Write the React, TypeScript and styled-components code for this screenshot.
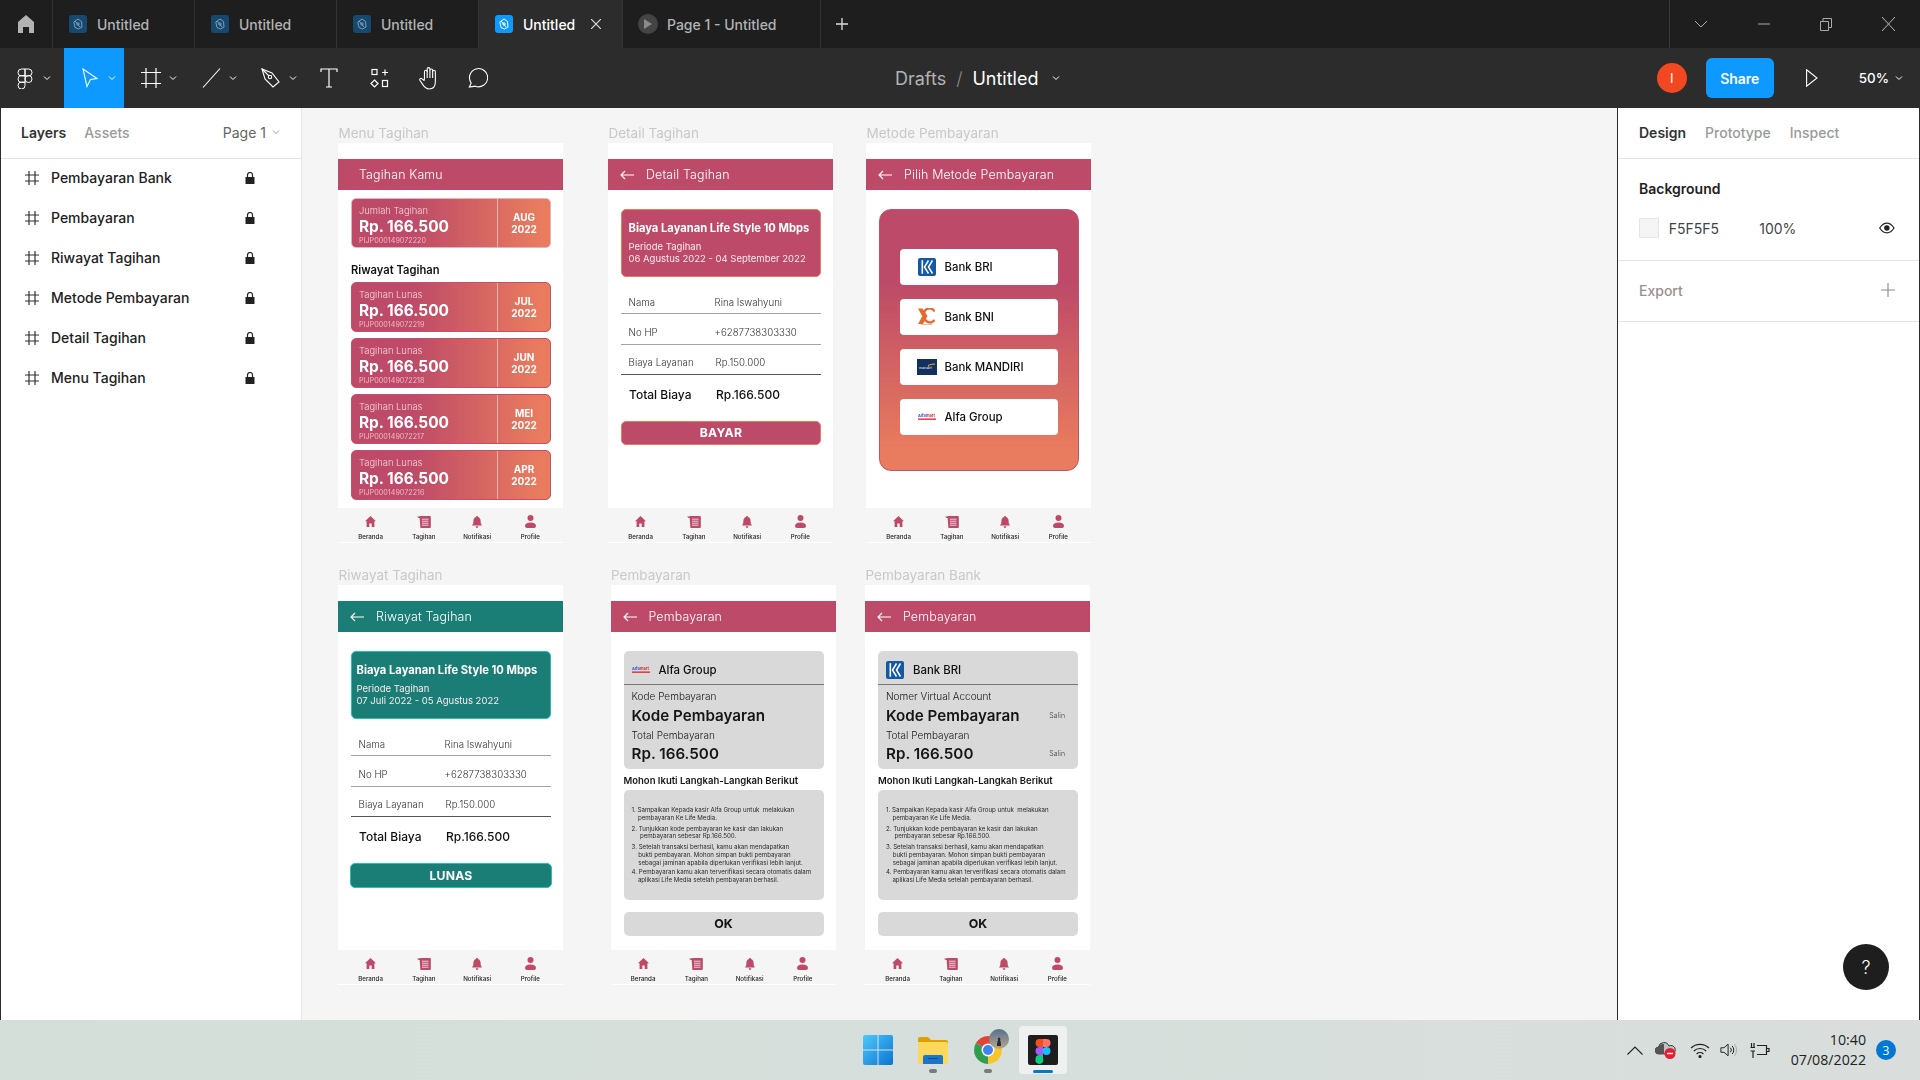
import React from "react";
import styled, { createGlobalStyle } from "styled-components";

const Global = createGlobalStyle`
  html, body { margin: 0; padding: 0; width: 1920px; height: 1080px; overflow: hidden; background: #f5f5f5; }
  body { font-family: Inter, "Liberation Sans", sans-serif; }
  * { box-sizing: border-box; }
`;

const rose = "#bd4a68";
const coral = "#e97c5e";
const teal = "#1b7e76";

const Page = styled.div`
  width: 1920px;
  height: 1080px;
  display: flex;
  flex-direction: column;
`;

/* ---------- tab bar ---------- */
const TabBar = styled.div`
  height: 48px;
  background: #1e1e1e;
  display: flex;
  color: #b3b3b3;
`;
const HomeTab = styled.div`
  width: 53px;
  display: flex;
  align-items: center;
  justify-content: center;
  border-right: 1px solid #333;
`;
const Tab = styled.div<{ $w: number; $active?: boolean }>`
  width: ${(p) => p.$w}px;
  display: flex;
  align-items: center;
  padding-left: 16px;
  gap: 10px;
  font-size: 14px;
  font-weight: 500;
  border-right: 1px solid #333;
  background: ${(p) => (p.$active ? "#2c2c2c" : "transparent")};
  color: ${(p) => (p.$active ? "#fff" : "#b3b3b3")};
`;
const PrototypeTab = styled(Tab)`
  padding-left: 15px;
  gap: 9px;
`;
const TabIcon = styled.div<{ $active?: boolean }>`
  width: 18px;
  height: 18px;
  border-radius: 3px;
  background: ${(p) => (p.$active ? "#0d99ff" : "#16496f")};
  color: ${(p) => (p.$active ? "#fff" : "#7f9db5")};
  display: flex;
  align-items: center;
  justify-content: center;
`;
const TabClose = styled.span`
  margin-left: 6px;
  display: flex;
`;
const PlayDot = styled.div`
  width: 20px;
  height: 20px;
  border-radius: 50%;
  background: #444;
  display: flex;
  align-items: center;
  justify-content: center;
`;
const PlusTab = styled.div`
  width: 42px;
  display: flex;
  align-items: center;
  justify-content: center;
`;
const WindowControls = styled.div`
  margin-left: auto;
  width: 251px;
  border-left: 1px solid #3a3a3a;
  display: grid;
  grid-template-columns: repeat(4, 62.5px);
`;
const WinButton = styled.div`
  display: flex;
  align-items: center;
  justify-content: center;
`;

/* ---------- toolbar ---------- */
const Toolbar = styled.div`
  height: 60px;
  background: #2c2c2c;
  display: flex;
  align-items: center;
  color: #fff;
`;
const Tool = styled.div<{ $w: number; $pad?: number; $active?: boolean }>`
  width: ${(p) => p.$w}px;
  height: 60px;
  padding-left: ${(p) => p.$pad ?? 17}px;
  display: flex;
  align-items: center;
  background: ${(p) => (p.$active ? "#0d99ff" : "transparent")};
`;
const ToolIcon = styled.div`
  width: 20px;
  display: flex;
  justify-content: center;
`;
const ToolChevron = styled.div`
  margin-left: 8px;
  display: flex;
`;
const Crumbs = styled.div`
  margin-left: 391px;
  display: flex;
  align-items: center;
  font-size: 18px;
`;
const CrumbMuted = styled.span`
  color: #b3b3b3;
`;
const CrumbSlash = styled.span`
  color: #8a8a8a;
  margin: 0 10px;
  font-weight: 300;
`;
const CrumbChevron = styled.span`
  margin-left: 14px;
  display: flex;
`;
const ToolbarRight = styled.div`
  margin-left: auto;
  display: flex;
  align-items: center;
  padding-right: 17px;
`;
const Avatar = styled.div`
  width: 30px;
  height: 30px;
  border-radius: 50%;
  background: #f24822;
  display: flex;
  align-items: center;
  justify-content: center;
  font-size: 13px;
`;
const ShareButton = styled.div`
  width: 68px;
  height: 40px;
  margin-left: 19px;
  border-radius: 6px;
  background: #0d99ff;
  display: flex;
  align-items: center;
  justify-content: center;
  font-size: 14px;
  font-weight: 600;
`;
const PlayButton = styled.div`
  margin-left: 32px;
  width: 12px;
  display: flex;
`;
const ZoomLabel = styled.div`
  margin-left: 41px;
  font-size: 13.4px;
  font-weight: 500;
  display: flex;
  align-items: center;
  gap: 6px;
`;

/* ---------- main ---------- */
const Main = styled.div`
  height: 912px;
  display: flex;
`;
const LeftPanel = styled.aside`
  width: 302px;
  background: #fff;
  border-left: 1px solid #2c2c2c;
  border-right: 1px solid #e5e5e5;
`;
const PanelTabs = styled.div`
  height: 51px;
  padding-bottom: 2px;
  border-bottom: 1px solid #e5e5e5;
  display: flex;
  align-items: center;
  font-size: 14px;
  font-weight: 500;
  color: #9a9a9a;
`;
const LeftTabs = styled(PanelTabs)`
  padding-left: 20px;
  padding-right: 21px;
  gap: 18px;
`;
const PanelTabActive = styled.span`
  color: #333;
  font-weight: 600;
`;
const PageSelect = styled.span`
  margin-left: auto;
  display: flex;
  align-items: center;
  gap: 6px;
  font-weight: 400;
  color: #666;
`;
const LayerList = styled.div`
  margin-top: -1.5px;
  display: flex;
  flex-direction: column;
`;
const LayerRow = styled.div`
  height: 40px;
  padding-left: 24px;
  display: flex;
  align-items: center;
  font-size: 14px;
  font-weight: 500;
  color: #222;
`;
const LayerName = styled.span`
  margin-left: 12px;
  width: 194px;
`;
const Canvas = styled.main`
  flex: 1;
  position: relative;
  background: #f5f5f5;
`;
const RightPanel = styled.aside`
  width: 303px;
  position: relative;
  background: #fff;
  border-left: 1.5px solid #2c2c2c;
  border-right: 1px solid #2c2c2c;
`;
const RightTabs = styled(PanelTabs)`
  padding-left: 21px;
  gap: 19px;
`;
const Section = styled.section<{ $h: number }>`
  height: ${(p) => p.$h}px;
  border-bottom: 1px solid #e5e5e5;
  padding: 0 24px 0 21px;
`;
const SectionTitle = styled.div`
  padding-top: 21px;
  font-size: 14px;
  font-weight: 600;
  color: #222;
`;
const BgRow = styled.div`
  margin-top: 21px;
  height: 20px;
  display: flex;
  align-items: center;
  font-size: 14px;
  color: #444;
`;
const Swatch = styled.div`
  width: 20px;
  height: 20px;
  background: #f5f5f5;
  border: 1px solid #e5e5e5;
`;
const HexValue = styled.span`
  margin-left: 10px;
  width: 92px;
`;
const Opacity = styled.span`
  width: 122px;
`;
const ExportRow = styled.div`
  height: 58px;
  display: flex;
  align-items: center;
  justify-content: space-between;
  font-size: 14px;
  font-weight: 500;
  color: #9a8f8f;
`;
const HelpButton = styled.div`
  position: absolute;
  right: 30px;
  bottom: 30px;
  width: 46px;
  height: 46px;
  border-radius: 50%;
  background: #1e1e1e;
  color: #fff;
  display: flex;
  align-items: center;
  justify-content: center;
  font-size: 18px;
  font-weight: 300;
`;

/* ---------- canvas frames ---------- */
const Node = styled.div<{ $x: number; $y: number }>`
  position: absolute;
  left: ${(p) => p.$x}px;
  top: ${(p) => p.$y}px;
  width: 225px;
  filter: blur(0.3px);
`;
const NodeLabel = styled.div`
  height: 21px;
  line-height: 23px;
  padding-left: 0.5px;
  font-size: 13.5px;
  color: #c8c8c8;
`;
const Board = styled.div`
  height: 365px;
  background: #fff;
  padding-top: 16px;
`;
const Header = styled.div<{ $color: string }>`
  height: 31px;
  background: ${(p) => p.$color};
  color: #fff;
  display: flex;
  align-items: center;
  padding-left: 12px;
  font-size: 12.4px;
  font-weight: 300;
  letter-spacing: 0.15px;
`;
const HeaderTitle = styled.span<{ $back?: boolean }>`
  margin-left: ${(p) => (p.$back ? 12 : 9)}px;
`;
const Content = styled.div`
  padding: 0 12px 0 13px;
`;
const BillStack = styled.div`
  display: flex;
  flex-direction: column;
  gap: 6px;
`;
const FirstBill = styled.div`
  padding-top: 8px;
`;
const BillCard = styled.div<{ $first?: boolean }>`
  height: 50px;
  border-radius: 5px;
  border: 1px solid ${(p) => (p.$first ? "#e6b2c0" : "#c4506f")};
  background: linear-gradient(90deg, ${rose} 30%, ${coral} 95%);
  display: flex;
  color: #fff;
`;
const BillMain = styled.div`
  flex: 1;
  padding: 6px 0 0 7px;
`;
const BillLabel = styled.div`
  margin-bottom: 2px;
  font-size: 9.4px;
  font-weight: 300;
  line-height: 11px;
  color: #f6d5dc;
`;
const BillAmount = styled.div`
  font-size: 15.4px;
  line-height: 18px;
  font-weight: 700;
`;
const BillId = styled.div`
  font-size: 7.2px;
  line-height: 10px;
  color: #efb9c6;
`;
const BillMonth = styled.div`
  width: 53px;
  border-left: 1px solid rgba(255, 255, 255, 0.45);
  display: flex;
  flex-direction: column;
  align-items: center;
  justify-content: center;
  font-size: 10px;
  line-height: 12px;
  font-weight: 700;
`;
const HistoryTitle = styled.div`
  margin: 15px 0 5px;
  font-size: 11.2px;
  line-height: 14px;
  font-weight: 600;
  color: #111;
`;
const SummaryCard = styled.div<{ $bg: string; $edge: string; $tight?: boolean }>`
  margin-top: 18.7px;
  height: 68.6px;
  border: 1px solid ${(p) => p.$edge};
  border-radius: 5px;
  background: ${(p) => p.$bg};
  color: #fff;
  padding: 11px 0 0 ${(p) => (p.$tight ? 4.5 : 6.5)}px;
`;
const SummaryTitle = styled.div`
  font-size: 11.2px;
  line-height: 15px;
  font-weight: 700;
`;
const SummaryText = styled.div`
  font-size: 9.5px;
  line-height: 11.3px;
  font-weight: 400;
  color: #fbeaee;
`;
const SummaryGap = styled.div`
  height: 5.6px;
`;
const InfoRows = styled.div`
  margin-top: 6.7px;
`;
const InfoRow = styled.div<{ $strong?: boolean }>`
  height: 30.3px;
  padding: 7px 0 0 7.6px;
  display: flex;
  align-items: center;
  font-size: 9.7px;
  font-weight: 300;
  color: #333;
  border-bottom: ${(p) => (p.$strong ? "1px solid #555" : "1.5px solid #a3a3a3")};
`;
const InfoKey = styled.span<{ $w: number }>`
  width: ${(p) => p.$w}px;
`;
const TotalRow = styled.div`
  height: 40px;
  padding-left: 8px;
  display: flex;
  align-items: center;
  font-size: 12px;
  font-weight: 500;
  color: #111;
`;
const ActionButton = styled.div<{ $bg: string; $edge: string; $tall?: boolean }>`
  margin: 6px ${(p) => (p.$tall ? "-1px" : "0")} 0;
  height: ${(p) => (p.$tall ? 25.5 : 23.7)}px;
  border: 1px solid ${(p) => p.$edge};
  border-radius: 5px;
  background: ${(p) => p.$bg};
  color: #fff;
  display: flex;
  align-items: center;
  justify-content: center;
  font-size: 12.2px;
  font-weight: 700;
  letter-spacing: 0.2px;
`;
const MethodPanel = styled.div`
  margin: 18.7px 0 0 -0.5px;
  height: 262px;
  border: 1px solid #c4506f;
  border-radius: 12px;
  background: linear-gradient(180deg, ${rose} 28%, ${coral} 93%);
  padding: 39px 20px 0;
  display: flex;
  flex-direction: column;
  gap: 13.7px;
`;
const MethodButton = styled.div`
  height: 36.3px;
  border-radius: 4px;
  background: #fff;
  display: flex;
  align-items: center;
  font-size: 11.4px;
  font-weight: 500;
  color: #111;
`;
const MethodLogo = styled.div`
  width: 45px;
  display: flex;
  justify-content: center;
  padding-left: 9px;
`;
const PayPanel = styled.div`
  margin-top: 19px;
  height: 118.3px;
  border-radius: 5px;
  background: #d9d9d9;
`;
const PayHead = styled.div`
  height: 34px;
  padding: 4px 0 0 8px;
  border-bottom: 1px solid #777;
  display: flex;
  align-items: center;
  font-size: 11.4px;
  font-weight: 500;
  color: #111;
`;
const PayLogo = styled.div`
  width: 18px;
  display: flex;
  justify-content: center;
  margin-right: 9px;
`;
const PayLine = styled.div<{ $h: number; $big?: boolean }>`
  height: ${(p) => p.$h}px;
  padding: 0 13px 0 8px;
  display: flex;
  align-items: center;
  justify-content: space-between;
  font-size: ${(p) => (p.$big ? 15.2 : 10)}px;
  font-weight: ${(p) => (p.$big ? 600 : 300)};
  color: #151515;
`;
const Copy = styled.span`
  font-size: 7px;
  font-weight: 300;
  color: #444;
`;
const StepsTitle = styled.div`
  margin: 6px 0 3px;
  height: 12px;
  line-height: 12px;
  font-size: 9.5px;
  font-weight: 600;
  color: #151515;
`;
const StepsPanel = styled.div`
  height: 109.7px;
  border-radius: 5px;
  background: #d9d9d9;
  padding: 16px 0 0 8px;
`;
const StepLine = styled.div<{ $indent?: number; $gap?: number }>`
  margin-top: ${(p) => p.$gap ?? 0}px;
  padding-left: ${(p) => p.$indent ?? 0}px;
  height: 7.67px;
  line-height: 7.67px;
  font-size: 6.15px;
  white-space: pre;
  color: #2a2a2a;
`;
const OkButton = styled.div`
  margin-top: 12px;
  height: 24px;
  border-radius: 5px;
  background: #d9d9d9;
  display: flex;
  align-items: center;
  justify-content: center;
  font-size: 12.4px;
  font-weight: 700;
  color: #111;
`;
const BottomNav = styled.div`
  height: 35px;
  padding: 0 6px;
  display: grid;
  grid-template-columns: repeat(4, 1fr);
  border-bottom: 1px solid #fff;
`;
const NavItem = styled.div`
  display: flex;
  flex-direction: column;
  align-items: center;
  padding-top: 7px;
  font-size: 6.2px;
  font-weight: 500;
  color: #222;
`;
const NavGlyph = styled.div`
  height: 13px;
  display: flex;
  align-items: center;
  margin-bottom: 5px;
`;

/* ---------- taskbar ---------- */
const Taskbar = styled.footer`
  height: 60px;
  background: linear-gradient(90deg, #d5dfd9, #d6dfdb 50%, #d9dedc);
  display: flex;
  align-items: center;
  position: relative;
`;
const TaskApps = styled.div`
  margin-left: 853.5px;
  display: flex;
  gap: 7px;
`;
const TaskSlot = styled.div<{ $active?: boolean }>`
  width: 48px;
  height: 48px;
  border-radius: 4px;
  position: relative;
  display: flex;
  align-items: center;
  justify-content: center;
  background: ${(p) => (p.$active ? "#eef1f0" : "transparent")};
`;
const TaskMark = styled.div<{ $active?: boolean }>`
  position: absolute;
  left: 50%;
  bottom: 1px;
  transform: translateX(-50%);
  width: ${(p) => (p.$active ? 20 : 8)}px;
  height: ${(p) => (p.$active ? 3 : 4)}px;
  border-radius: 2px;
  background: ${(p) => (p.$active ? "#0078d4" : "#787c7a")};
`;
const ChromeBadge = styled.div`
  position: absolute;
  left: 25px;
  top: 3px;
  display: flex;
`;
const Tray = styled.div`
  margin-left: auto;
  padding-right: 24px;
  display: flex;
  align-items: center;
`;
const TraySlot = styled.div<{ $w: number }>`
  width: ${(p) => p.$w}px;
  display: flex;
  justify-content: center;
`;
const Clock = styled.div`
  width: 84px;
  text-align: right;
  font-family: "Open Sans", "Noto Sans", sans-serif;
  font-size: 14.2px;
  line-height: 20px;
  color: #222;
`;
const Badge = styled.div`
  width: 20px;
  height: 20px;
  margin-left: 10px;
  border-radius: 50%;
  background: #0078d4;
  color: #fff;
  display: flex;
  align-items: center;
  justify-content: center;
  font-family: "Open Sans", sans-serif;
  font-size: 12px;
`;

/* ---------- drawings ---------- */
const Chevron = ({ c = "#fff", s = 8 }: { c?: string; s?: number }) => (
  <svg width={s} height={s} viewBox="0 0 8 8" fill="none" stroke={c} strokeWidth="1">
    <path d="M1 2.5 4 5.5 7 2.5" />
  </svg>
);
const FileGlyph = () => (
  <svg width="12" height="12" viewBox="0 0 12 12" fill="none" stroke="currentColor" strokeWidth="1">
    <path d="M6 1 9.5 3.5 10 9 6.5 11 3 9.5 1.8 4Z" />
    <path d="M3 3 8 9" />
    <circle cx="6" cy="6" r="1.2" />
  </svg>
);
const ArrowBack = () => (
  <svg width="14" height="10" viewBox="0 0 14 10" fill="none" stroke="#fff" strokeWidth="1.1">
    <path d="M14 5H1M5 1 1 5l4 4" />
  </svg>
);
const Hash = () => (
  <svg width="14" height="14" viewBox="0 0 14 14" fill="none" stroke="#333" strokeWidth="1.2">
    <path d="M4 0v14M10 0v14M0 4h14M0 10h14" />
  </svg>
);
const Lock = () => (
  <svg width="10" height="12" viewBox="0 0 10 12" fill="#222">
    <path d="M0.5 5h9v7h-9z" />
    <path d="M2.5 5V3a2.5 2.5 0 0 1 5 0v2" fill="none" stroke="#222" strokeWidth="1.2" />
  </svg>
);
const HomeIcon = () => (
  <svg width="11" height="11" viewBox="0 0 11 11" fill={rose}>
    <path d="M5.5 0 11 5.2H9.4V11H6.7V7.4H4.3V11H1.6V5.2H0Z" />
  </svg>
);
const BillIcon = () => (
  <svg width="14" height="12" viewBox="0 0 14 12">
    <path d="M0 .6h3.5V2H1.5z" fill={rose} />
    <path d="M2.6 0H13a.8.8 0 0 1 .8.8V11a1 1 0 0 1-1 1H3.4L2.6 1z" fill={rose} />
    <path d="M5 3.2h6.5M5 5.2h6.5M5 7.2h6.5M5 9.2h6.5" stroke="#f5f5f5" strokeWidth=".8" />
  </svg>
);
const BellIcon = () => (
  <svg width="10" height="12" viewBox="0 0 10 12" fill={rose}>
    <path d="M5 0c.6 0 1 .4 1 1 1.7.5 2.6 2 2.6 3.8 0 2.2.4 3.4 1.4 4.7H0C1 8.2 1.400 7 1.400 4.800 1.400 3 2.300 1.500 4 1c0-.6.400-1 1-1Z" />
    <path d="M3.700 10.300h2.600C6.300 11.200 5.700 12 5 12s-1.300-.8-1.300-1.700Z" />
  </svg>
);
const PersonIcon = () => (
  <svg width="11" height="13" viewBox="0 0 11 13" fill={rose}>
    <circle cx="5.500" cy="3" r="3" />
    <path d="M0 11c0-2.200 2-3.500 5.500-3.500S11 8.800 11 11c0 1.200-1 2-2 2H2c-1 0-2-.8-2-2Z" />
  </svg>
);
const BriLogo = () => (
  <svg width="18" height="18" viewBox="0 0 18 18">
    <rect width="18" height="18" rx="2" fill="#1259a7" />
    <path d="M3.500 2.200h1.600v13.600H3.500z" fill="#fff" />
    <path d="M10.500 2.500 6.500 9l4 6.500M14.500 2.500 10.500 9l4 6.500" fill="none" stroke="#fff" strokeWidth="1.500" />
  </svg>
);
const BniLogo = () => (
  <svg width="17" height="17" viewBox="0 0 17 17">
    <path d="M0 .5h4.500L9.500 8 5 16H0l4.300-7.800Z" fill="#e8692c" />
    <path d="M16.500 3.500A5.500 5.500 0 0 0 6.500 8.500a5.500 5.500 0 0 0 10 3.500" fill="none" stroke="#e8692c" strokeWidth="2.400" />
    <path d="M3 16.500h11" stroke="#f3b9a0" strokeWidth="1" />
  </svg>
);
const MandiriLogo = () => (
  <svg width="20" height="16" viewBox="0 0 20 16">
    <rect width="20" height="16" fill="#13305f" />
    <text x="2" y="9.500" fontSize="3.600" fill="#dfe6f2" fontFamily="Inter">mandiri</text>
    <path d="M11 6.500c2-1 4.500-1.400 7-1.400" stroke="#f4b731" strokeWidth="1" fill="none" />
  </svg>
);
const AlfaLogo = () => (
  <svg width="18" height="8" viewBox="0 0 18 8">
    <text x="0" y="4.400" fontSize="3.900" fontWeight="700" fill="#2a52e0" fontFamily="Inter">Alfa</text>
    <text x="8" y="4.400" fontSize="3.900" fontWeight="700" fill="#d42a2a" fontFamily="Inter">mart</text>
    <rect y="5.500" width="18" height="1.300" fill="#e01f26" />
  </svg>
);
const WindowsLogo = () => (
  <svg width="30" height="30" viewBox="0 0 30 30">
    <defs>
      <linearGradient id="winA" x1="0" y1="0" x2="1" y2="1">
        <stop offset="0" stopColor="#4fc8fa" />
        <stop offset="1" stopColor="#0a74d2" />
      </linearGradient>
    </defs>
    <rect width="30" height="30" rx="2" fill="url(#winA)" />
    <path d="M15 0v30M0 15h30" stroke="#d6e2e2" strokeWidth="1" />
  </svg>
);
const FolderLogo = () => (
  <svg width="30" height="27" viewBox="0 0 30 27">
    <path d="M0 2a2 2 0 0 1 2-2h8l3 3h15a2 2 0 0 1 2 2v2H0Z" fill="#e0a100" />
    <path d="M0 5h28a2 2 0 0 1 2 2v18a2 2 0 0 1-2 2H2a2 2 0 0 1-2-2Z" fill="#fbd75c" />
    <path d="M5 27v-7a2 2 0 0 1 2-2h16a2 2 0 0 1 2 2v7Z" fill="#1a76c8" />
    <path d="M10 21.500h10" stroke="#0c4f90" strokeWidth="1" />
  </svg>
);
const ChromeLogo = () => (
  <svg width="28" height="28" viewBox="0 0 28 28">
    <path d="M14 14 26.100 7A14 14 0 0 0 1.900 7Z" fill="#df4436" />
    <path d="M14 14 14 28A14 14 0 0 0 26.100 7Z" fill="#f8c62b" />
    <path d="M14 14 1.900 7A14 14 0 0 0 14 28Z" fill="#2f9e50" />
    <circle cx="14" cy="14" r="6.500" fill="#fff" />
    <circle cx="14" cy="14" r="5" fill="#3f82ee" />
  </svg>
);
const ProfileBadge = () => (
  <svg width="20" height="20" viewBox="0 0 20 20">
    <defs>
      <linearGradient id="sky" x1="0" y1="0" x2="0" y2="1">
        <stop offset="0" stopColor="#55718c" />
        <stop offset="1" stopColor="#b9a78e" />
      </linearGradient>
    </defs>
    <circle cx="10" cy="10" r="10" fill="url(#sky)" />
    <path d="M8 17c0-3 .5-5 1.300-6a1.300 1.300 0 1 1 1.600 0c.8 1 1.100 3 1.100 6Z" fill="#2a2a2a" />
  </svg>
);
const FigmaLogo = () => (
  <svg width="30" height="30" viewBox="0 0 30 30">
    <rect width="30" height="30" rx="2" fill="#1e1e1e" />
    <path d="M7.500 8a4 4 0 0 1 4-4H15v8h-3.500a4 4 0 0 1-4-4Z" fill="#f24e1e" />
    <path d="M15 4h3.500a4 4 0 0 1 0 8H15Z" fill="#ff7262" />
    <path d="M7.500 16a4 4 0 0 1 4-4H15v8h-3.500a4 4 0 0 1-4-4Z" fill="#a259ff" />
    <circle cx="18.500" cy="16" r="4" fill="#1abcfe" />
    <path d="M7.500 24a4 4 0 0 1 4-4H15v3.500a4 4 0 1 1-7.500.5Z" fill="#0acf83" />
  </svg>
);

const navItems = [
  { label: "Beranda", Icon: HomeIcon },
  { label: "Tagihan", Icon: BillIcon },
  { label: "Notifikasi", Icon: BellIcon },
  { label: "Profile", Icon: PersonIcon },
];
const Nav = () => (
  <BottomNav>
    {navItems.map(({ label, Icon }) => (
      <NavItem key={label}>
        <NavGlyph>
          <Icon />
        </NavGlyph>
        {label}
      </NavItem>
    ))}
  </BottomNav>
);

const Bill = ({ label, id, month, first }: { label: string; id: string; month: string; first?: boolean }) => (
  <BillCard $first={first}>
    <BillMain>
      <BillLabel>{label}</BillLabel>
      <BillAmount>Rp. 166.500</BillAmount>
      <BillId>{id}</BillId>
    </BillMain>
    <BillMonth>
      <span>{month}</span>
      <span>2022</span>
    </BillMonth>
  </BillCard>
);

const Detail = ({
  bg, edge, period, action, tall,
}: { bg: string; edge: string; period: string; action: string; tall?: boolean }) => (
  <Content>
    <SummaryCard $bg={bg} $edge={edge} $tight={tall}>
      <SummaryTitle>Biaya Layanan Life Style 10 Mbps</SummaryTitle>
      <SummaryGap />
      <SummaryText>Periode Tagihan</SummaryText>
      <SummaryText>{period}</SummaryText>
    </SummaryCard>
    <InfoRows>
      <InfoRow>
        <InfoKey $w={86}>Nama</InfoKey>
        <span>Rina Iswahyuni</span>
      </InfoRow>
      <InfoRow>
        <InfoKey $w={86}>No HP</InfoKey>
        <span>+6287738303330</span>
      </InfoRow>
      <InfoRow $strong>
        <InfoKey $w={87}>Biaya Layanan</InfoKey>
        <span>Rp.150.000</span>
      </InfoRow>
    </InfoRows>
    <TotalRow>
      <InfoKey $w={87}>Total Biaya</InfoKey>
      <span>Rp.166.500</span>
    </TotalRow>
    <ActionButton $bg={bg} $edge={edge} $tall={tall}>
      {action}
    </ActionButton>
  </Content>
);

const steps: { text: string; indent?: number; gap?: number }[] = [
  { text: "1. Sampaikan Kepada kasir Alfa Group untuk  melakukan" },
  { text: "pembayaran Ke Life Media.", indent: 6.400 },
  { text: "2. Tunjukkan kode pembayaran ke kasir dan lakukan", gap: 3 },
  { text: "pembayaran sebesar Rp.166.500.", indent: 8.400 },
  { text: "3. Setelah transaksi berhasil, kamu akan mendapatkan", gap: 3.300 },
  { text: "bukti pembayaran. Mohon simpan bukti pembayaran", indent: 6.700 },
  { text: "sebagai jaminan apabila diperlukan verifikasi lebih lanjut.", indent: 6.700 },
  { text: "4. Pembayaran kamu akan terverifikasi secara otomatis dalam", gap: 2 },
  { text: "aplikasi Life Media setelah pembayaran berhasil.", indent: 6.400 },
];

const Payment = ({
  logo, name, label, copy,
}: { logo: React.ReactNode; name: string; label: string; copy?: boolean }) => (
  <Content>
    <PayPanel>
      <PayHead>
        <PayLogo>{logo}</PayLogo>
        {name}
      </PayHead>
      <PayLine $h={22.300}>{label}</PayLine>
      <PayLine $h={17} $big>
        Kode Pembayaran
        {copy && <Copy>Salin</Copy>}
      </PayLine>
      <PayLine $h={22}>Total Pembayaran</PayLine>
      <PayLine $h={14} $big>
        Rp. 166.500
        {copy && <Copy>Salin</Copy>}
      </PayLine>
    </PayPanel>
    <StepsTitle>Mohon Ikuti Langkah-Langkah Berikut</StepsTitle>
    <StepsPanel>
      {steps.map((s) => (
        <StepLine key={s.text} $indent={s.indent} $gap={s.gap}>
          {s.text}
        </StepLine>
      ))}
    </StepsPanel>
    <OkButton>OK</OkButton>
  </Content>
);

const Frame = ({
  x, y, label, title, color = rose, back = true, children,
}: {
  x: number; y: number; label: string; title: string; color?: string; back?: boolean; children: React.ReactNode;
}) => (
  <Node $x={x} $y={y}>
    <NodeLabel>{label}</NodeLabel>
    <Board>
      <Header $color={color}>
        {back && <ArrowBack />}
        <HeaderTitle $back={back}>{title}</HeaderTitle>
      </Header>
      {children}
    </Board>
    <Nav />
  </Node>
);

const layers = ["Pembayaran Bank", "Pembayaran", "Riwayat Tagihan", "Metode Pembayaran", "Detail Tagihan", "Menu Tagihan"];
const methods = [
  { name: "Bank BRI", logo: <BriLogo /> },
  { name: "Bank BNI", logo: <BniLogo /> },
  { name: "Bank MANDIRI", logo: <MandiriLogo /> },
  { name: "Alfa Group", logo: <AlfaLogo /> },
];

export default function App() {
  return (
    <Page>
      <Global />
      <TabBar>
        <HomeTab>
          <svg width="16" height="18" viewBox="0 0 16 18" fill="#b3b3b3">
            <path d="M8 0 16 7v11h-5v-6H5v6H0V7Z" />
          </svg>
        </HomeTab>
        {[0, 1, 2].map((i) => (
          <Tab key={i} $w={142}>
            <TabIcon>
              <FileGlyph />
            </TabIcon>
            Untitled
          </Tab>
        ))}
        <Tab $w={144} $active>
          <TabIcon $active>
            <FileGlyph />
          </TabIcon>
          Untitled
          <TabClose>
            <svg width="10" height="10" viewBox="0 0 10 10" stroke="#ddd" strokeWidth="1.200">
              <path d="M0 0 10 10M10 0 0 10" />
            </svg>
          </TabClose>
        </Tab>
        <PrototypeTab $w={198}>
          <PlayDot>
            <svg width="8" height="10" viewBox="0 0 8 10" fill="#8a8a8a">
              <path d="M0 0 8 5 0 10Z" />
            </svg>
          </PlayDot>
          Page 1 - Untitled
        </PrototypeTab>
        <PlusTab>
          <svg width="12" height="12" viewBox="0 0 12 12" stroke="#ddd" strokeWidth="1.300">
            <path d="M6 0v12M0 6h12" />
          </svg>
        </PlusTab>
        <WindowControls>
          <WinButton>
            <svg width="14" height="8" viewBox="0 0 14 8" fill="none" stroke="#aaa">
              <path d="M1 1 7 7 13 1" />
            </svg>
          </WinButton>
          <WinButton>
            <svg width="12" height="2" viewBox="0 0 12 2" stroke="#aaa">
              <path d="M0 1h12" />
            </svg>
          </WinButton>
          <WinButton>
            <svg width="12" height="13" viewBox="0 0 12 13" fill="none" stroke="#aaa">
              <path d="M.5 3.500h8v9h-8zM3 3.500V.5h8.500v9H8.500" />
            </svg>
          </WinButton>
          <WinButton>
            <svg width="13" height="14" viewBox="0 0 13 14" stroke="#bbb">
              <path d="M0 0 13 14M13 0 0 14" />
            </svg>
          </WinButton>
        </WindowControls>
      </TabBar>

      <Toolbar>
        <Tool $w={64} $pad={14.500}>
          <ToolIcon>
            <svg width="16" height="21" viewBox="0 0 16 21" fill="none" stroke="#fff">
              <path d="M8 1H4.500a3.500 3.500 0 0 0 0 7H8ZM8 1h3.500a3.500 3.500 0 0 1 0 7H8ZM8 7.500H4.500a3.500 3.500 0 0 0 0 7H8Z" />
              <circle cx="11.500" cy="11" r="3.500" />
              <path d="M8 14H4.500A3.500 3.500 0 1 0 8 17.500Z" />
            </svg>
          </ToolIcon>
          <ToolChevron>
            <Chevron />
          </ToolChevron>
        </Tool>
        <Tool $w={60} $pad={16} $active>
          <ToolIcon>
            <svg width="16" height="20" viewBox="0 0 16 20" fill="none" stroke="#fff" strokeWidth="1.100">
              <path d="M1 1 15 10.500 8.500 11.500 5 18.500Z" />
            </svg>
          </ToolIcon>
          <ToolChevron>
            <Chevron />
          </ToolChevron>
        </Tool>
        <Tool $w={60}>
          <ToolIcon>
            <svg width="20" height="20" viewBox="0 0 20 20" stroke="#fff" strokeWidth="1.200">
              <path d="M5 0v20M15 0v20M0 4.500h20M0 15.500h20" />
            </svg>
          </ToolIcon>
          <ToolChevron>
            <Chevron />
          </ToolChevron>
        </Tool>
        <Tool $w={60}>
          <ToolIcon>
            <svg width="19" height="20" viewBox="0 0 19 20" stroke="#fff" strokeWidth="1.100">
              <path d="M1 19.500 18 .5" />
            </svg>
          </ToolIcon>
          <ToolChevron>
            <Chevron />
          </ToolChevron>
        </Tool>
        <Tool $w={60}>
          <ToolIcon>
            <svg width="20" height="20" viewBox="0 0 20 20" fill="none" stroke="#fff" strokeWidth="1.100">
              <path d="M1 1 4 11 12 19 18 14 11 5Z" />
              <path d="M1 1 8 8" />
              <circle cx="9" cy="9" r="1.700" />
            </svg>
          </ToolIcon>
          <ToolChevron>
            <Chevron />
          </ToolChevron>
        </Tool>
        <Tool $w={50} $pad={15}>
          <ToolIcon>
            <svg width="18" height="20" viewBox="0 0 18 20" fill="none" stroke="#fff" strokeWidth="1.200">
              <path d="M1 4V1h16v3M9 1v18M6 19h6" />
            </svg>
          </ToolIcon>
        </Tool>
        <Tool $w={50} $pad={16}>
          <ToolIcon>
            <svg width="20" height="20" viewBox="0 0 20 20" fill="none" stroke="#fff" strokeWidth="1.200">
              <rect x="2" y="1.500" width="5" height="5" />
              <path d="M15 1.500v6M12 4.500h6" />
              <path d="M4.500 12 8 15.500 4.500 19 1 15.500Z" />
              <rect x="12.500" y="12.500" width="5" height="6" />
            </svg>
          </ToolIcon>
        </Tool>
        <Tool $w={50} $pad={15}>
          <ToolIcon>
            <svg width="22" height="25" viewBox="0 0 22 25" fill="none" stroke="#fff" strokeWidth="1.200">
              <path d="M6 14V5a1.500 1.500 0 0 1 3 0V2a1.500 1.500 0 0 1 3 0v1.500a1.500 1.500 0 0 1 3 0V5a1.500 1.500 0 0 1 3 0v11c0 5-2.500 8-7 8-3.500 0-5-2-7-5l-3-4.500c-.8-1.500 1-3 2.500-1.500L6 15" />
              <path d="M9 4v8M12 3v9M15 4v8" />
            </svg>
          </ToolIcon>
        </Tool>
        <Tool $w={50} $pad={14}>
          <ToolIcon>
            <svg width="22" height="22" viewBox="0 0 22 22" fill="none" stroke="#fff" strokeWidth="1.200">
              <path d="M1.500 21 3.500 16.500A10 10 0 1 1 8 20Z" />
            </svg>
          </ToolIcon>
        </Tool>
        <Crumbs>
          <CrumbMuted>Drafts</CrumbMuted>
          <CrumbSlash>/</CrumbSlash>
          <span>Untitled</span>
          <CrumbChevron>
            <Chevron />
          </CrumbChevron>
        </Crumbs>
        <ToolbarRight>
          <Avatar>I</Avatar>
          <ShareButton>Share</ShareButton>
          <PlayButton>
            <svg width="12" height="18" viewBox="0 0 12 18" fill="none" stroke="#fff" strokeWidth="1.100">
              <path d="M.6.800 11 9 .6 17.200Z" />
            </svg>
          </PlayButton>
          <ZoomLabel>
            50%
            <Chevron />
          </ZoomLabel>
        </ToolbarRight>
      </Toolbar>

      <Main>
        <LeftPanel>
          <LeftTabs>
            <PanelTabActive>Layers</PanelTabActive>
            <span>Assets</span>
            <PageSelect>
              Page 1
              <Chevron c="#999" />
            </PageSelect>
          </LeftTabs>
          <LayerList>
            {layers.map((l) => (
              <LayerRow key={l}>
                <Hash />
                <LayerName>{l}</LayerName>
                <Lock />
              </LayerRow>
            ))}
          </LayerList>
        </LeftPanel>

        <Canvas>
          <Frame x={36} y={14} label="Menu Tagihan" title="Tagihan Kamu" back={false}>
            <Content>
              <FirstBill>
                <Bill first label="Jumlah Tagihan" id="PIJP000149072220" month="AUG" />
              </FirstBill>
              <HistoryTitle>Riwayat Tagihan</HistoryTitle>
              <BillStack>
                <Bill label="Tagihan Lunas" id="PIJP000149072219" month="JUL" />
                <Bill label="Tagihan Lunas" id="PIJP000149072218" month="JUN" />
                <Bill label="Tagihan Lunas" id="PIJP000149072217" month="MEI" />
                <Bill label="Tagihan Lunas" id="PIJP000149072216" month="APR" />
              </BillStack>
            </Content>
          </Frame>
          <Frame x={306} y={14} label="Detail Tagihan" title="Detail Tagihan">
            <Detail bg={rose} edge={coral} period="06 Agustus 2022 - 04 September 2022" action="BAYAR" />
          </Frame>
          <Frame x={564} y={14} label="Metode Pembayaran" title="Pilih Metode Pembayaran">
            <Content>
              <MethodPanel>
                {methods.map((m) => (
                  <MethodButton key={m.name}>
                    <MethodLogo>{m.logo}</MethodLogo>
                    {m.name}
                  </MethodButton>
                ))}
              </MethodPanel>
            </Content>
          </Frame>
          <Frame x={36} y={456} label="Riwayat Tagihan" title="Riwayat Tagihan" color={teal}>
            <Detail bg={teal} edge="#1fc4b4" period="07 Juli 2022 - 05 Agustus 2022" action="LUNAS" tall />
          </Frame>
          <Frame x={308.500} y={456} label="Pembayaran" title="Pembayaran">
            <Payment logo={<AlfaLogo />} name="Alfa Group" label="Kode Pembayaran" />
          </Frame>
          <Frame x={563} y={456} label="Pembayaran Bank" title="Pembayaran">
            <Payment logo={<BriLogo />} name="Bank BRI" label="Nomer Virtual Account" copy />
          </Frame>
        </Canvas>

        <RightPanel>
          <RightTabs>
            <PanelTabActive>Design</PanelTabActive>
            <span>Prototype</span>
            <span>Inspect</span>
          </RightTabs>
          <Section $h={102}>
            <SectionTitle>Background</SectionTitle>
            <BgRow>
              <Swatch />
              <HexValue>F5F5F5</HexValue>
              <Opacity>100%</Opacity>
              <svg width="16" height="12" viewBox="0 0 16 12" fill="none" stroke="#222" strokeWidth="1.200">
                <path d="M.7 6C3 2.500 5.300 1 8 1s5 1.500 7.300 5C13 9.500 10.700 11 8 11S3 9.500.7 6Z" />
                <circle cx="8" cy="6" r="2.200" fill="#222" />
              </svg>
            </BgRow>
          </Section>
          <Section $h={61}>
            <ExportRow>
              Export
              <svg width="14" height="14" viewBox="0 0 14 14" stroke="#8a8a8a" strokeWidth="1.100">
                <path d="M7 0v14M0 7h14" />
              </svg>
            </ExportRow>
          </Section>
          <HelpButton>?</HelpButton>
        </RightPanel>
      </Main>

      <Taskbar>
        <TaskApps>
          <TaskSlot>
            <WindowsLogo />
          </TaskSlot>
          <TaskSlot>
            <FolderLogo />
            <TaskMark />
          </TaskSlot>
          <TaskSlot>
            <ChromeLogo />
            <ChromeBadge>
              <ProfileBadge />
            </ChromeBadge>
            <TaskMark />
          </TaskSlot>
          <TaskSlot $active>
            <FigmaLogo />
            <TaskMark $active />
          </TaskSlot>
        </TaskApps>
        <Tray>
          <TraySlot $w={30}>
            <svg width="16" height="9" viewBox="0 0 16 9" fill="none" stroke="#222" strokeWidth="1.100">
              <path d="M.5 8.500 8 1l7.500 7.500" />
            </svg>
          </TraySlot>
          <TraySlot $w={30}>
            <svg width="21" height="18" viewBox="0 0 21 18">
              <path d="M4 13a3.500 3.500 0 0 1-.5-7A5.500 5.500 0 0 1 14 5a4 4 0 0 1 4 7.500Z" fill="#bfc3c2" stroke="#333" strokeWidth="1" />
              <path d="M4 13a3.500 3.500 0 0 1-.5-7A5.500 5.500 0 0 1 9 3v10Z" fill="#555" />
              <circle cx="15" cy="12.500" r="5.500" fill="#e02030" />
              <path d="M12 12.500h6" stroke="#fff" strokeWidth="1.400" />
            </svg>
          </TraySlot>
          <TraySlot $w={40}>
            <svg width="20" height="15" viewBox="0 0 20 15" fill="none" stroke="#222" strokeWidth="1.200">
              <path d="M1 5a13 13 0 0 1 18 0M3.800 8a9 9 0 0 1 12.400 0M6.600 11a5 5 0 0 1 6.800 0" />
              <circle cx="10" cy="13.500" r="1" fill="#222" />
            </svg>
          </TraySlot>
          <TraySlot $w={18}>
            <svg width="20" height="16" viewBox="0 0 20 16" fill="none" stroke="#222" strokeWidth="1.100">
              <path d="M1 5.500h3.500L9 1.500v13l-4.500-4H1Z" />
              <path d="M11.500 5.500a3.500 3.500 0 0 1 0 5M13.500 3.500a6.500 6.500 0 0 1 0 9" />
              <path d="M16 1.500a10 10 0 0 1 0 13" stroke="#aaa" />
            </svg>
          </TraySlot>
          <TraySlot $w={44}>
            <svg width="20" height="16" viewBox="0 0 20 16" fill="none" stroke="#222" strokeWidth="1.200">
              <path d="M7 3.500h9.500v9H7M17 6.500h2v3h-2" />
              <path d="M0.500 5.500h4.500M0.500 9h4.500M3 9v7" />
              <path d="M1.500 1v4M4 1v4" />
            </svg>
          </TraySlot>
          <Clock>
            10:40
            <br />
            07/08/2022
          </Clock>
          <Badge>3</Badge>
        </Tray>
      </Taskbar>
    </Page>
  );
}
